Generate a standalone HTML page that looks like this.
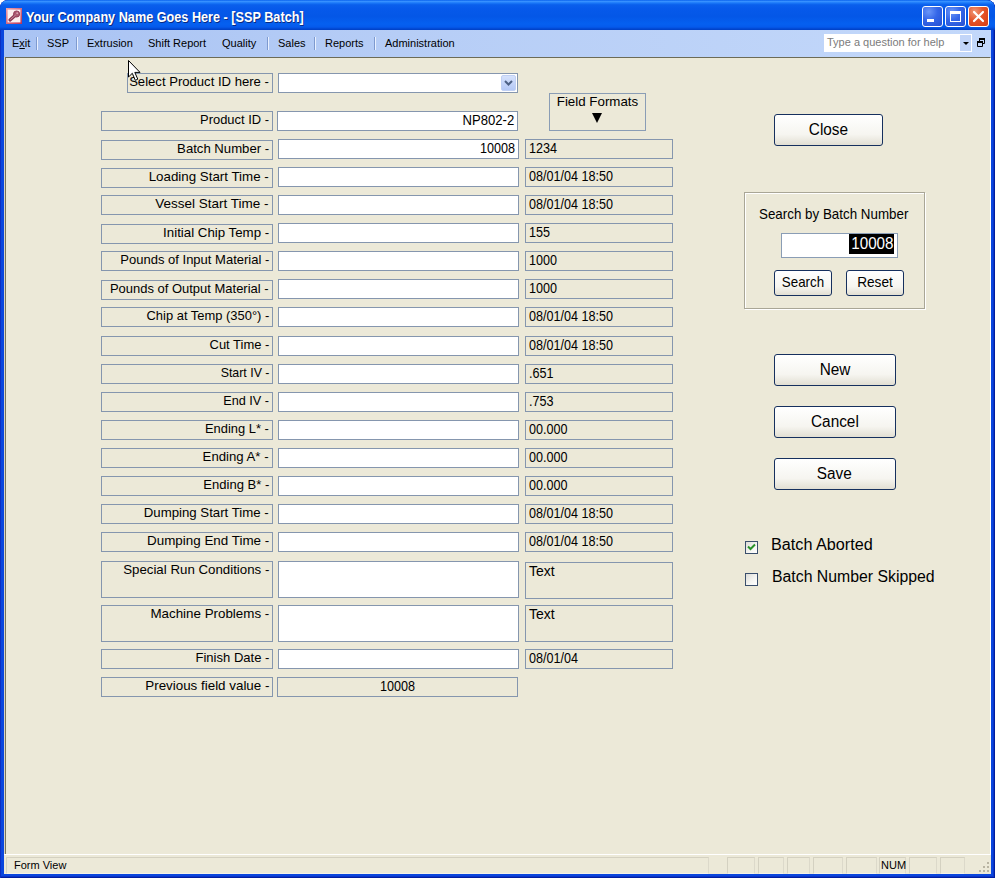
<!DOCTYPE html>
<html><head><meta charset="utf-8"><title>SSP Batch</title>
<style>
*{box-sizing:border-box;margin:0;padding:0}
html,body{width:995px;height:878px;overflow:hidden;background:#fff;font-family:"Liberation Sans",sans-serif;}
#win{position:absolute;left:0;top:0;width:995px;height:878px;background:#0A46DE;overflow:hidden;border-radius:8px 8px 0 0;box-shadow:inset 1px 0 0 #0B2FC4,inset -1px 0 0 #001EA0,inset 0 -1px 0 #001EA0,inset -2px 0 0 #0A34C8,inset 0 -2px 0 #0A34C8}
#title{position:absolute;left:0;top:0;width:995px;height:30px;background:linear-gradient(#0A62EE 0,#3690FF 5%,#1A78F8 10%,#0A5FEC 16%,#0659EA 30%,#0457E7 55%,#0560F0 80%,#055AEC 90%,#0145CE 97%,#0040C4 100%);border-radius:8px 8px 0 0}
#title .txt{position:absolute;left:26px;top:9px;font-size:14px;line-height:16px;font-weight:bold;color:#fff;text-shadow:1px 1px 0 #0A2A80;white-space:nowrap;transform-origin:0 50%;transform:scaleX(.905)}
#menu{position:absolute;left:4px;top:30px;width:987px;height:27px;background:linear-gradient(90deg,#A9C3F3 0%,#B6CDF6 40%,#C3D8FA 100%);font-size:11px;color:#000}
#menu span{position:absolute;top:7px;white-space:nowrap}
#menu i{position:absolute;top:7px;width:1px;height:13px;background:#7E9ACF;border-right:1px solid #E8F0FF;box-sizing:content-box}
#sepline{position:absolute;left:5px;top:57px;width:986px;height:797px;background:#ECE9D8;border-top:1px solid #6C6B57;border-left:1px solid #75735F;border-right:1px solid #fff}
#lft{position:absolute;left:4px;top:57px;width:1px;height:817px;background:#D8D4C4}
#client{display:none}
#status{position:absolute;left:4px;top:854px;width:987px;height:20px;background:#ECE9D8;border-top:1px solid #fff;font-size:11px}
.lb,.in,.fm{position:absolute;border:1px solid #8596AE;font-size:14px;line-height:16px;white-space:nowrap;color:#000}
.lb span,.in span,.fm span{position:absolute;right:3px;top:0;display:block;transform-origin:100% 50%;transform:scaleX(.945)}
.fm span{transform-origin:0 50%;right:auto;left:3px}

.lb{left:101px;width:172px;text-align:right;padding:0 3px 0 0;background:#ECE9D8;font-size:13.3px}
.in{left:278px;background:#fff;text-align:right;padding:0 3px 0 0}
.fm{left:525px;width:148px;padding:0 0 0 3px;background:#ECE9D8}
.btn{position:absolute;border:1px solid #16305E;border-radius:3px;background:linear-gradient(#FFFFFF,#F6F5F0 65%,#E2DFD3);font-size:16px;text-align:center;color:#000}

.tb{position:absolute;top:6px;width:21px;height:21px;border:1px solid #fff;border-radius:3px;background:radial-gradient(circle at 30% 25%,#6A96F8 0%,#3466E8 45%,#2450D2 100%)}
.tb.cl{background:radial-gradient(circle at 30% 25%,#F09878 0%,#E4542A 45%,#D83C12 100%)}
#help{position:absolute;left:820px;top:4px;width:148px;height:18px;background:#fff;font-size:11px;color:#7B7B7B}
#help span{position:absolute;left:3px;top:2px}
#help b{position:absolute;right:0;top:0;width:12px;height:18px;background:#C2D5F8;border:1px solid #fff;border-left:none}
#help b:after{content:"";position:absolute;left:3px;top:7px;border:3px solid transparent;border-top:3px solid #000;border-bottom:none}
.fr{position:absolute;border:1px solid #A9A696;box-shadow:1px 1px 0 #fff, inset 1px 1px 0 #fff}
.t{position:absolute;white-space:nowrap;color:#000}
.cb{position:absolute;width:13px;height:13px;border:1px solid #3A4F6C;background:linear-gradient(135deg,#DCDCD7,#F6F6F3 60%,#fff)}
.sp{position:absolute;top:2px;height:17px;border:1px solid #D4D1C1;border-bottom-color:#F4F2E8;border-right-color:#DCD9CA}
</style></head><body>
<div id="win">
<div id="title"><span class="txt">Your Company Name Goes Here - [SSP Batch]</span></div>

<!-- title icon -->
<svg style="position:absolute;left:6px;top:8px" width="16" height="16" viewBox="0 0 16 16"><defs><linearGradient id="ib" x1="0" y1="0" x2="1" y2="1"><stop offset="0" stop-color="#F0A4AC"/><stop offset="1" stop-color="#B83458"/></linearGradient></defs><rect x="0" y="0" width="16" height="16" fill="url(#ib)"/><rect x="1.6" y="1.6" width="12.8" height="12.8" fill="#FCF0F0"/><path d="M9.6 7 L4 12" stroke="#8C3A54" stroke-width="3.2" stroke-linecap="round"/><circle cx="10.6" cy="6" r="3.1" fill="#A85870" stroke="#8C3450" stroke-width="0.8"/><circle cx="11.2" cy="5.2" r="1" fill="#D8A0B0"/><path d="M9.6 7 L4.4 11.6" stroke="#C890A0" stroke-width="1"/></svg>
<div class="tb" style="left:922px"><div style="position:absolute;left:4px;top:12px;width:7px;height:3px;background:#fff"></div></div>
<div class="tb" style="left:945px"><div style="position:absolute;left:4px;top:4px;width:11px;height:11px;border:1px solid #fff;border-top-width:3px"></div></div>
<div class="tb cl" style="left:968px"><svg width="19" height="19" viewBox="0 0 19 19" style="position:absolute;left:0;top:0"><path d="M5 5 L14 14 M14 5 L5 14" stroke="#fff" stroke-width="2.2" stroke-linecap="round"/></svg></div>
<div id="menu">
<div id="help"><span>Type a question for help</span><b></b></div>
<svg style="position:absolute;left:973px;top:8px" width="8" height="9" viewBox="0 0 8 9"><path d="M2.5 1h5v4.5h-5z" fill="none" stroke="#000" stroke-width="1"/><rect x="2" y="0" width="6" height="2" fill="#000"/><path d="M0.5 4h5v4.5h-5z" fill="#C2D5F8" stroke="#000" stroke-width="1"/><rect x="0" y="3" width="6" height="2" fill="#000"/></svg>
<span style="left:8px">E<u>x</u>it</span><i style="left:32px"></i>
<span style="left:43px">SSP</span><i style="left:72px"></i>
<span style="left:83px">Extrusion</span>
<span style="left:144px">Shift Report</span>
<span style="left:218px">Quality</span><i style="left:263px"></i>
<span style="left:274px">Sales</span><i style="left:310px"></i>
<span style="left:321px">Reports</span><i style="left:370px"></i>
<span style="left:381px">Administration</span>
</div>
<div id="sepline"></div><div id="lft"></div>
<div id="client"></div>
<div class="lb" style="left:127px;width:146px;top:73px;height:20px"><span style="transform:scaleX(0.985)">Select Product ID here -</span></div>
<div class="in" style="top:73px;height:20px;width:240px"></div>
<div class="lb" style="top:111px;height:20px"><span style="transform:scaleX(0.971)">Product ID -</span></div>
<div class="in" style="top:111px;height:20px;width:241px;left:277px"><span style="transform:scaleX(0.937)">NP802-2</span></div>
<div class="lb" style="top:140px;height:20px"><span style="transform:scaleX(0.988)">Batch Number -</span></div>
<div class="in" style="top:139px;height:20px;width:241px"><span style="transform:scaleX(0.9)">10008</span></div>
<div class="fm" style="top:139px;height:20px"><span style="transform:scaleX(0.9)">1234</span></div>
<div class="lb" style="top:168px;height:20px"><span style="transform:scaleX(1.003)">Loading Start Time -</span></div>
<div class="in" style="top:167px;height:20px;width:241px"><span style="transform:scaleX(0.9)"></span></div>
<div class="fm" style="top:167px;height:20px"><span style="transform:scaleX(0.9)">08/01/04 18:50</span></div>
<div class="lb" style="top:195px;height:20px"><span style="transform:scaleX(1.016)">Vessel Start Time -</span></div>
<div class="in" style="top:195px;height:20px;width:241px"><span style="transform:scaleX(0.9)"></span></div>
<div class="fm" style="top:195px;height:20px"><span style="transform:scaleX(0.9)">08/01/04 18:50</span></div>
<div class="lb" style="top:224px;height:20px"><span style="transform:scaleX(0.999)">Initial Chip Temp -</span></div>
<div class="in" style="top:223px;height:20px;width:241px"><span style="transform:scaleX(0.9)"></span></div>
<div class="fm" style="top:223px;height:20px"><span style="transform:scaleX(0.9)">155</span></div>
<div class="lb" style="top:251px;height:20px"><span style="transform:scaleX(0.978)">Pounds of Input Material -</span></div>
<div class="in" style="top:251px;height:20px;width:241px"><span style="transform:scaleX(0.9)"></span></div>
<div class="fm" style="top:251px;height:20px"><span style="transform:scaleX(0.9)">1000</span></div>
<div class="lb" style="top:280px;height:20px"><span style="transform:scaleX(0.976)">Pounds of Output Material -</span></div>
<div class="in" style="top:279px;height:20px;width:241px"><span style="transform:scaleX(0.9)"></span></div>
<div class="fm" style="top:279px;height:20px"><span style="transform:scaleX(0.9)">1000</span></div>
<div class="lb" style="top:307px;height:20px"><span style="transform:scaleX(0.972)">Chip at Temp (350°) -</span></div>
<div class="in" style="top:307px;height:20px;width:241px"><span style="transform:scaleX(0.9)"></span></div>
<div class="fm" style="top:307px;height:20px"><span style="transform:scaleX(0.9)">08/01/04 18:50</span></div>
<div class="lb" style="top:336px;height:20px"><span style="transform:scaleX(0.975)">Cut Time -</span></div>
<div class="in" style="top:336px;height:20px;width:241px"><span style="transform:scaleX(0.9)"></span></div>
<div class="fm" style="top:336px;height:20px"><span style="transform:scaleX(0.9)">08/01/04 18:50</span></div>
<div class="lb" style="top:364px;height:20px"><span style="transform:scaleX(0.93)">Start IV -</span></div>
<div class="in" style="top:364px;height:20px;width:241px"><span style="transform:scaleX(0.9)"></span></div>
<div class="fm" style="top:364px;height:20px"><span style="transform:scaleX(0.9)">.651</span></div>
<div class="lb" style="top:392px;height:20px"><span style="transform:scaleX(0.953)">End IV -</span></div>
<div class="in" style="top:392px;height:20px;width:241px"><span style="transform:scaleX(0.9)"></span></div>
<div class="fm" style="top:392px;height:20px"><span style="transform:scaleX(0.9)">.753</span></div>
<div class="lb" style="top:420px;height:20px"><span style="transform:scaleX(0.97)">Ending L* -</span></div>
<div class="in" style="top:420px;height:20px;width:241px"><span style="transform:scaleX(0.9)"></span></div>
<div class="fm" style="top:420px;height:20px"><span style="transform:scaleX(0.9)">00.000</span></div>
<div class="lb" style="top:448px;height:20px"><span style="transform:scaleX(0.991)">Ending A* -</span></div>
<div class="in" style="top:448px;height:20px;width:241px"><span style="transform:scaleX(0.9)"></span></div>
<div class="fm" style="top:448px;height:20px"><span style="transform:scaleX(0.9)">00.000</span></div>
<div class="lb" style="top:476px;height:20px"><span style="transform:scaleX(0.98)">Ending B* -</span></div>
<div class="in" style="top:476px;height:20px;width:241px"><span style="transform:scaleX(0.9)"></span></div>
<div class="fm" style="top:476px;height:20px"><span style="transform:scaleX(0.9)">00.000</span></div>
<div class="lb" style="top:504px;height:20px"><span style="transform:scaleX(0.994)">Dumping Start Time -</span></div>
<div class="in" style="top:504px;height:20px;width:241px"><span style="transform:scaleX(0.9)"></span></div>
<div class="fm" style="top:504px;height:20px"><span style="transform:scaleX(0.9)">08/01/04 18:50</span></div>
<div class="lb" style="top:532px;height:20px"><span style="transform:scaleX(1.008)">Dumping End Time -</span></div>
<div class="in" style="top:532px;height:20px;width:241px"><span style="transform:scaleX(0.9)"></span></div>
<div class="fm" style="top:532px;height:20px"><span style="transform:scaleX(0.9)">08/01/04 18:50</span></div>
<div class="lb" style="top:561px;height:37px"><span style="transform:scaleX(0.999)">Special Run Conditions -</span></div>
<div class="in" style="top:561px;height:37px;width:241px"><span style="transform:scaleX(0.9)"></span></div>
<div class="fm" style="top:562px;height:37px"><span style="transform:scaleX(1.0)">Text</span></div>
<div class="lb" style="top:605px;height:37px"><span style="transform:scaleX(1.005)">Machine Problems -</span></div>
<div class="in" style="top:605px;height:37px;width:241px"><span style="transform:scaleX(0.9)"></span></div>
<div class="fm" style="top:605px;height:37px"><span style="transform:scaleX(1.0)">Text</span></div>
<div class="lb" style="top:649px;height:20px"><span style="transform:scaleX(0.98)">Finish Date -</span></div>
<div class="in" style="top:649px;height:20px;width:241px"><span style="transform:scaleX(0.9)"></span></div>
<div class="fm" style="top:649px;height:20px"><span style="transform:scaleX(0.9)">08/01/04</span></div>
<div class="lb" style="top:677px;height:20px"><span style="transform:scaleX(1.006)">Previous field value -</span></div>
<div class="in" style="left:277px;top:677px;height:20px;width:241px;background:#ECE9D8;text-align:center;padding-right:0"><span style="left:0;right:0;text-align:center;transform-origin:50% 50%;transform:scaleX(.9)">10008</span></div>

<div class="fr" style="left:549px;top:93px;width:97px;height:38px;box-shadow:none;border-color:#8A9DB5"></div>
<div class="t" style="left:549px;width:97px;text-align:center;top:94px;font-size:13.33px;line-height:16px">Field Formats</div>
<div style="position:absolute;left:592px;top:113px;border:5.5px solid transparent;border-top:10px solid #000;border-bottom:none"></div>
<div class="btn" style="left:774px;top:114px;width:109px;height:32px;line-height:30px"><span style="display:inline-block;transform:scaleX(.96)">Close</span></div>
<div class="fr" style="left:744px;top:192px;width:181px;height:117px"></div>
<div class="t" style="left:759px;top:206px;font-size:14.3px;line-height:17px;transform-origin:0 50%;transform:scaleX(.935)">Search by Batch Number</div>
<div style="position:absolute;left:781px;top:233px;width:117px;height:25px;background:#fff;border:1px solid #8A9DB5"></div>
<div style="position:absolute;left:849px;top:234px;width:45px;height:20px;background:#000;color:#fff;font-size:16px;line-height:20px;text-align:right"><span style="display:block;transform-origin:100% 50%;transform:scaleX(.95);padding-right:1px">10008</span></div>
<div class="btn" style="left:774px;top:270px;width:58px;height:26px;line-height:22px;font-size:14.5px"><span style="display:inline-block;transform:scaleX(.92)">Search</span></div>
<div class="btn" style="left:846px;top:270px;width:58px;height:26px;line-height:22px;font-size:14.5px"><span style="display:inline-block;transform:scaleX(.94)">Reset</span></div>
<div class="btn" style="left:774px;top:354px;width:122px;height:32px;line-height:30px"><span style="display:inline-block;transform:scaleX(.96)">New</span></div>
<div class="btn" style="left:774px;top:406px;width:122px;height:32px;line-height:30px"><span style="display:inline-block;transform:scaleX(.96)">Cancel</span></div>
<div class="btn" style="left:774px;top:458px;width:122px;height:32px;line-height:30px"><span style="display:inline-block;transform:scaleX(.96);padding-right:2px">Save</span></div>
<div class="cb" style="left:745px;top:541px"><svg width="11" height="11" viewBox="0 0 11 11" style="position:absolute;left:0;top:0"><path d="M2 4.5 L4.5 7 L9 2.5" fill="none" stroke="#2A922A" stroke-width="2"/></svg></div>
<div class="t" style="left:771px;top:535px;font-size:16px;line-height:19px;transform-origin:0 50%;transform:scaleX(1.012)">Batch Aborted</div>
<div class="cb" style="left:745px;top:573px"></div>
<div class="t" style="left:772px;top:567px;font-size:16px;line-height:19px;transform-origin:0 50%;transform:scaleX(.988)">Batch Number Skipped</div>
<!-- combo arrow -->
<div style="position:absolute;left:501px;top:75px;width:15px;height:16px;border-radius:2px;background:linear-gradient(#D6E2FC,#B4C8F6);border:1px solid #C0D0F4"><svg width="13" height="14" viewBox="0 0 13 14" style="position:absolute;left:0;top:0"><path d="M3 5 L6.5 8.5 L10 5" fill="none" stroke="#4D6185" stroke-width="2"/></svg></div>
<!-- cursor -->
<svg style="position:absolute;left:128px;top:60px" width="14" height="22" viewBox="0 0 14 22"><path d="M0.5 0.5 L0.5 17 L4.3 13.3 L7.3 20.3 L9.8 19.2 L6.8 12.4 L12 12.4 Z" fill="#fff" stroke="#000" stroke-width="1"/></svg>
<div id="status"><span style="position:absolute;left:10px;top:4px">Form View</span>
<i class="sp" style="left:2px;width:703px"></i><i class="sp" style="left:723px;width:28px"></i><i class="sp" style="left:754px;width:26px"></i><i class="sp" style="left:783px;width:23px"></i><i class="sp" style="left:809px;width:30px"></i><i class="sp" style="left:842px;width:31px"></i><i class="sp" style="left:875px;width:27px"></i><i class="sp" style="left:905px;width:28px"></i><i class="sp" style="left:936px;width:25px"></i>
<span style="position:absolute;left:877px;top:4px">NUM</span>
<svg style="position:absolute;left:975px;top:7px" width="12" height="12" viewBox="0 0 12 12"><g fill="#B8B4A2"><rect x="8" y="8" width="2" height="2"/><rect x="4" y="8" width="2" height="2"/><rect x="8" y="4" width="2" height="2"/><rect x="0" y="8" width="2" height="2"/><rect x="4" y="4" width="2" height="2"/><rect x="8" y="0" width="2" height="2"/></g></svg>
</div>
</div>
</body></html>
